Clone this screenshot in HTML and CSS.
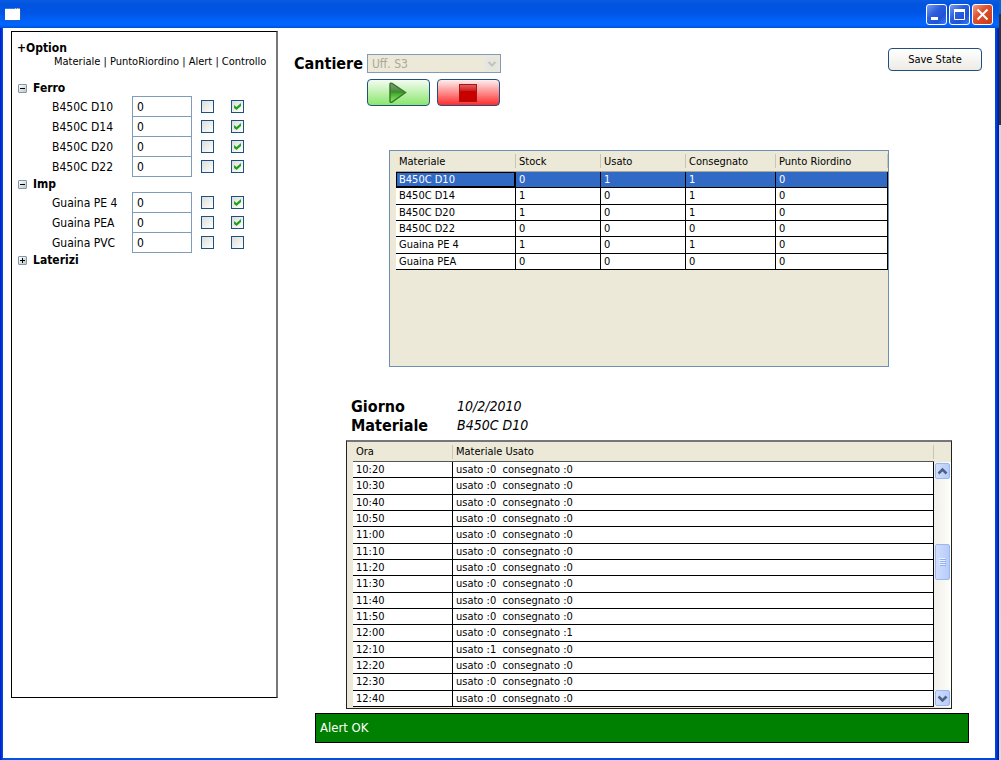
FILE: index.html
```html
<!DOCTYPE html>
<html lang="it">
<head>
<meta charset="utf-8">
<title>Cantiere</title>
<link rel="stylesheet" href="styles.css">
</head>
<body>
<div class="desktop">
<div class="window">
  <header class="titlebar">
    <svg class="app-icon" width="16" height="14" viewBox="0 0 16 14" aria-hidden="true"><rect x="0" y="1" width="15" height="12" fill="#fff"/><path d="M0 1.500h15" stroke="#2d7be8" stroke-width="1"/><path d="M10 1.500h1M12 1.500h1" stroke="#9cc4f8"/><path d="M13 1.500h2" stroke="#f07830"/><path d="M1 13.500h15M15.500 3v11" stroke="#2a5cc0"/></svg>
    <div class="caption-buttons">
      <button class="cap" aria-label="Riduci"><svg width="19" height="19" viewBox="0 0 19 19"><path d="M4 13.500h7" stroke="#fff" stroke-width="3"/></svg></button>
      <button class="cap" aria-label="Ingrandisci"><svg width="19" height="19" viewBox="0 0 19 19"><path d="M4.500 4.500h10v10h-10z" fill="none" stroke="#fff"/><path d="M4 5.500h11" stroke="#fff" stroke-width="3"/></svg></button>
      <button class="cap cap-close" aria-label="Chiudi"><svg width="19" height="19" viewBox="0 0 19 19"><path d="M4.500 4.500l10 10M14.500 4.500l-10 10" stroke="#fff" stroke-width="2"/></svg></button>
    </div>
  </header>
  <div class="client">
    <aside class="sidebar">
      <h2 class="option">+Option</h2>
      <p class="columns">Materiale | PuntoRiordino | Alert | Controllo</p>
      <section class="group">
        <h3 class="group-head"><button class="toggle" aria-label="Comprimi Ferro"><svg width="9" height="9" viewBox="0 0 9 9"><path d="M2 4.500h5" stroke="#000"/></svg></button>Ferro</h3>
        <div class="item"><label for="m1">B450C D10</label><input class="qty" id="m1" value="0"><input class="tick" type="checkbox" aria-label="Alert B450C D10"><input class="tick" type="checkbox" checked aria-label="Controllo B450C D10"></div>
        <div class="item"><label for="m2">B450C D14</label><input class="qty" id="m2" value="0"><input class="tick" type="checkbox" aria-label="Alert B450C D14"><input class="tick" type="checkbox" checked aria-label="Controllo B450C D14"></div>
        <div class="item"><label for="m3">B450C D20</label><input class="qty" id="m3" value="0"><input class="tick" type="checkbox" aria-label="Alert B450C D20"><input class="tick" type="checkbox" checked aria-label="Controllo B450C D20"></div>
        <div class="item"><label for="m4">B450C D22</label><input class="qty" id="m4" value="0"><input class="tick" type="checkbox" aria-label="Alert B450C D22"><input class="tick" type="checkbox" checked aria-label="Controllo B450C D22"></div>
      </section>
      <section class="group">
        <h3 class="group-head"><button class="toggle" aria-label="Comprimi Imp"><svg width="9" height="9" viewBox="0 0 9 9"><path d="M2 4.500h5" stroke="#000"/></svg></button>Imp</h3>
        <div class="item"><label for="m5">Guaina PE 4</label><input class="qty" id="m5" value="0"><input class="tick" type="checkbox" aria-label="Alert Guaina PE 4"><input class="tick" type="checkbox" checked aria-label="Controllo Guaina PE 4"></div>
        <div class="item"><label for="m6">Guaina PEA</label><input class="qty" id="m6" value="0"><input class="tick" type="checkbox" aria-label="Alert Guaina PEA"><input class="tick" type="checkbox" checked aria-label="Controllo Guaina PEA"></div>
        <div class="item"><label for="m7">Guaina PVC</label><input class="qty" id="m7" value="0"><input class="tick" type="checkbox" aria-label="Alert Guaina PVC"><input class="tick" type="checkbox" aria-label="Controllo Guaina PVC"></div>
      </section>
      <section class="group">
        <h3 class="group-head"><button class="toggle" aria-label="Espandi Laterizi"><svg width="9" height="9" viewBox="0 0 9 9"><path d="M2 4.500h5M4.500 2v5" stroke="#000"/></svg></button>Laterizi</h3>
      </section>
    </aside>
    <main class="main">
      <div class="toolbar">
        <label class="big" for="site">Cantiere</label>
        <div class="controls">
          <div class="select-wrap">
            <select class="site" id="site" disabled><option>Uff. S3</option></select>
            <svg class="select-arrow" width="14" height="14" viewBox="0 0 14 14" aria-hidden="true"><rect width="14" height="14" rx="1" fill="#e6e6e0"/><path d="M3.500 5l3.500 3.500L10.500 5" fill="none" stroke="#c3c3b8" stroke-width="2"/></svg>
          </div>
          <div class="run-buttons">
            <button class="run play" aria-label="Avvia"><svg width="20" height="22" viewBox="0 0 20 22"><defs><linearGradient id="pg" x1="0" y1="0" x2="0" y2="1"><stop offset="0" stop-color="#8a9c88"/><stop offset=".48" stop-color="#3f8a30"/><stop offset=".5" stop-color="#3da528"/><stop offset="1" stop-color="#8cf26a"/></linearGradient></defs><path d="M2 2.500Q2 .5 4 1.500L17.500 10.500 4 20Q2 21 2 19z" fill="url(#pg)" stroke="#3a7a2a" stroke-width="1.500"/></svg></button>
            <button class="run stop" aria-label="Ferma"><svg width="18" height="18" viewBox="0 0 18 18"><defs><linearGradient id="sg" x1="0" y1="0" x2="0" y2="1"><stop offset="0" stop-color="#e06060"/><stop offset="1" stop-color="#cc1c1c"/></linearGradient></defs><rect x=".5" y=".5" width="17" height="17" fill="#c80000" stroke="#a81414"/><rect x="1" y="1" width="16" height="6" fill="url(#sg)"/></svg></button>
          </div>
        </div>
        <button class="save">Save State</button>
      </div>
      <div class="panel stock-panel">
        <table class="grid stock">
          <colgroup><col class="c-name"><col class="c-num"><col class="c-num"><col class="c-mid"><col></colgroup>
          <thead><tr><th>Materiale</th><th>Stock</th><th>Usato</th><th>Consegnato</th><th>Punto Riordino</th></tr></thead>
          <tbody>
            <tr class="selected"><td class="current">B450C D10</td><td>0</td><td>1</td><td>1</td><td>0</td></tr>
            <tr><td>B450C D14</td><td>1</td><td>0</td><td>1</td><td>0</td></tr>
            <tr><td>B450C D20</td><td>1</td><td>0</td><td>1</td><td>0</td></tr>
            <tr><td>B450C D22</td><td>0</td><td>0</td><td>0</td><td>0</td></tr>
            <tr><td>Guaina PE 4</td><td>1</td><td>0</td><td>1</td><td>0</td></tr>
            <tr><td>Guaina PEA</td><td>0</td><td>0</td><td>0</td><td>0</td></tr>
          </tbody>
        </table>
      </div>
      <dl class="info">
        <dt>Giorno</dt><dd>10/2/2010</dd>
        <dt>Materiale</dt><dd>B450C D10</dd>
      </dl>
      <div class="panel log-panel">
        <table class="grid log">
          <colgroup><col class="c-time"><col></colgroup>
          <thead><tr><th>Ora</th><th>Materiale Usato</th></tr></thead>
          <tbody>
            <tr><td>10:20</td><td>usato :0&nbsp; consegnato :0</td></tr>
            <tr><td>10:30</td><td>usato :0&nbsp; consegnato :0</td></tr>
            <tr><td>10:40</td><td>usato :0&nbsp; consegnato :0</td></tr>
            <tr><td>10:50</td><td>usato :0&nbsp; consegnato :0</td></tr>
            <tr><td>11:00</td><td>usato :0&nbsp; consegnato :0</td></tr>
            <tr><td>11:10</td><td>usato :0&nbsp; consegnato :0</td></tr>
            <tr><td>11:20</td><td>usato :0&nbsp; consegnato :0</td></tr>
            <tr><td>11:30</td><td>usato :0&nbsp; consegnato :0</td></tr>
            <tr><td>11:40</td><td>usato :0&nbsp; consegnato :0</td></tr>
            <tr><td>11:50</td><td>usato :0&nbsp; consegnato :0</td></tr>
            <tr><td>12:00</td><td>usato :0&nbsp; consegnato :1</td></tr>
            <tr><td>12:10</td><td>usato :1&nbsp; consegnato :0</td></tr>
            <tr><td>12:20</td><td>usato :0&nbsp; consegnato :0</td></tr>
            <tr><td>12:30</td><td>usato :0&nbsp; consegnato :0</td></tr>
            <tr><td>12:40</td><td>usato :0&nbsp; consegnato :0</td></tr>
          </tbody>
        </table>
        <div class="scrollbar">
          <button class="scroll-btn" aria-label="Su"><svg width="13" height="13" viewBox="0 0 13 13"><path d="M2.500 8.500l4-4 4 4" fill="none" stroke="#4d6185" stroke-width="2.500"/></svg></button>
          <div class="track-above"></div>
          <div class="thumb"><svg width="7" height="8" viewBox="0 0 7 8"><path d="M0 .5h6M0 2.500h6M0 4.500h6M0 6.500h6" stroke="#eef4fe"/><path d="M1 1.500h6M1 3.500h6M1 5.500h6M1 7.500h6" stroke="#8cb0f8"/></svg></div>
          <div class="track-below"></div>
          <button class="scroll-btn" aria-label="Giù"><svg width="13" height="13" viewBox="0 0 13 13"><path d="M2.500 4.500l4 4 4-4" fill="none" stroke="#4d6185" stroke-width="2.500"/></svg></button>
        </div>
      </div>
      <div class="alert" role="status">Alert OK</div>
    </main>
  </div>
</div>
</div>
</body>
</html>
```
FILE: styles.css
```css
* { box-sizing: border-box; }

body, h2, h3, p, dl, dd { margin: 0; }

body, button, input, select {
  font-family: "DejaVu Sans Condensed", Tahoma, "Noto Sans", sans-serif;
  font-size: 11px;
  color: #000;
}

button { padding: 0; }
button svg { display: block; }

.desktop {
  display: flex;
  min-height: 100vh;
  padding-right: 2px;
  background: linear-gradient(#06c 0 14px, #303038 14px 125px, #d8d6e0 125px 500px, #dcdae4);
}

.window {
  flex: 1;
  display: flex;
  flex-direction: column;
  background: linear-gradient(90deg, #0018c8, #0054e8 3px, #0046e0 calc(100% - 3px), #00139a);
}

.titlebar {
  display: flex;
  align-items: center;
  justify-content: space-between;
  height: 28px;
  padding: 0 6px 0 5px;
  background: linear-gradient(#0a5ce0, #0054e0 4px, #0054e3 12px, #0062fa 21px, #0066ff 25px, #0050d8);
}

.caption-buttons { display: flex; gap: 2px; }

.cap {
  width: 21px;
  height: 21px;
  border: 1px solid #fff;
  border-radius: 3px;
  background: linear-gradient(135deg, #7a9df0, #2c5fdc 40%, #1f52d8 70%, #3c78f0);
}

.cap-close { background: linear-gradient(135deg, #f0a088, #e0502c 40%, #c83c14); }

.client {
  flex: 1;
  display: flex;
  margin: 0 4px 2px 3px;
  background: #fff;
}

.sidebar {
  width: 267px;
  margin: 3px 0 60px 8px;
  padding: 9px 5px;
  border: 1px solid #000;
  border-right: 2px solid #777;
}

.option { font-size: 12px; line-height: 15px; }

.columns {
  margin: 0 0 13px 37px;
  line-height: 11px;
  white-space: nowrap;
}

.group-head {
  display: flex;
  align-items: center;
  gap: 6px;
  height: 16px;
  padding-left: 1px;
  font-size: 12px;
}

.toggle {
  width: 9px;
  height: 9px;
  border: 1px solid #7898b5;
  border-radius: 1px;
  background: linear-gradient(135deg, #fff, #c8c4b8);
}

.toggle svg { margin: -1px; }

.item {
  display: grid;
  grid-template-columns: 80px 60px 13px 13px;
  align-items: center;
  height: 20px;
  padding-left: 35px;
  font-size: 12px;
}

.item .tick:nth-of-type(2) { margin-left: 9px; }
.item .tick:nth-of-type(3) { margin-left: 26px; }

.qty {
  height: 21px;
  width: 60px;
  padding: 0 4px;
  border: 1px solid #7f9db9;
  font-size: 12px;
}

.tick {
  appearance: none;
  width: 13px;
  height: 13px;
  margin: 0;
  border: 1px solid #1c5180;
  background: linear-gradient(135deg, #dcdcd7, #fff);
}

.tick:checked::before {
  content: "";
  display: block;
  width: 7px;
  height: 7px;
  margin: 2px;
  background: #21a121;
  clip-path: polygon(0 28%, 36% 58%, 100% 0, 100% 42%, 36% 100%, 0 70%);
}

.main {
  flex: 1;
  display: flex;
  flex-direction: column;
  min-width: 0;
  padding: 20px 13px 15px 16px;
}

.toolbar { display: flex; align-items: flex-start; }

.big { margin: 6px 4px 0 0; font-size: 16px; line-height: 20px; font-weight: bold; }

.controls { padding-top: 6px; }

.select-wrap { display: grid; align-items: center; }

.site, .select-arrow { grid-area: 1 / 1; }

.select-arrow { justify-self: end; margin-right: 2px; }

.site {
  appearance: none;
  width: 134px;
  height: 19px;
  padding: 0 4px;
  border: 1px solid #7f9db9;
  border-radius: 0;
  background: #ece9d8;
  color: #aca899;
  font-size: 12px;
  opacity: 1;
}

.run-buttons { display: flex; gap: 7px; margin-top: 6px; }

.run {
  display: flex;
  align-items: center;
  justify-content: center;
  width: 63px;
  height: 27px;
  border: 1px solid #1f5080;
  border-radius: 4px;
}

.play { background: linear-gradient(#f4fcf2, #8ae66c); }
.stop { background: linear-gradient(#fdeeee, #ff2c2c); }

.save {
  width: 94px;
  height: 23px;
  margin-left: auto;
  border: 1px solid #1f5080;
  border-radius: 4px;
  background: linear-gradient(#fff, #ecebe4);
}

.panel { background: #ece9d8; }

.stock-panel {
  height: 217px;
  margin: 44px 93px 0 95px;
  padding-left: 6px;
  border: 1px solid #6e8fb4;
}

.grid {
  border-collapse: separate;
  border-spacing: 0;
  table-layout: fixed;
  width: 100%;
}

.grid th {
  height: 21px;
  padding: 0 3px;
  border-bottom: 1px solid #aca899;
  background: linear-gradient(#c9c6b6, #c9c6b6) right 0 center / 1px 14px no-repeat, #ece9d8;
  font-weight: normal;
  text-align: left;
}

.grid td {
  height: 16px;
  padding: 0 3px;
  border-right: 1px solid #000;
  border-bottom: 1px solid #000;
  background: #fff;
  line-height: 13px;
  white-space: nowrap;
}

.stock { height: 119px; }

.stock .selected td { background: #316ac5; color: #fff; }
.stock .selected .current { border: 2px solid #000; border-width: 1px 2px 2px 1px; padding-left: 2px; }

.c-name { width: 120px; }
.c-num { width: 85px; }
.c-mid { width: 90px; }
.c-time { width: 100px; }

.info {
  display: grid;
  grid-template-columns: 106px 1fr;
  margin: 30px 0 5px 57px;
  line-height: 19px;
}

.info dt { font-size: 16px; font-weight: bold; }
.info dd { font-size: 14px; font-style: italic; }

.log-panel {
  flex: 1;
  display: flex;
  margin: 0 30px 0 52px;
  padding: 0 0 1px 6px;
  border: 1px solid #222;
  border-top: 2px solid #777;
}

.log { flex: 1; width: auto; }

.log th { border-bottom-color: #555; height: 20px; }

.scrollbar {
  display: flex;
  flex-direction: column;
  width: 17px;
  margin-top: 20px;
  padding: 1px;
  background: linear-gradient(90deg, #f0efe8, #fefefb);
}

.scroll-btn, .thumb {
  display: flex;
  align-items: center;
  justify-content: center;
  width: 15px;
  height: 16px;
  border: 1px solid #9ab8f0;
  border-radius: 2px;
  background: linear-gradient(90deg, #d0defe, #b8cbf8);
}

.thumb { height: 36px; }

.track-above { flex: 64; }
.track-below { flex: 108; }

.alert {
  height: 30px;
  margin: 4px 13px 0 21px;
  padding: 0 4px;
  border: 1px solid #000;
  background: #008000;
  color: #fff;
  font-size: 13px;
  line-height: 28px;
}
```
